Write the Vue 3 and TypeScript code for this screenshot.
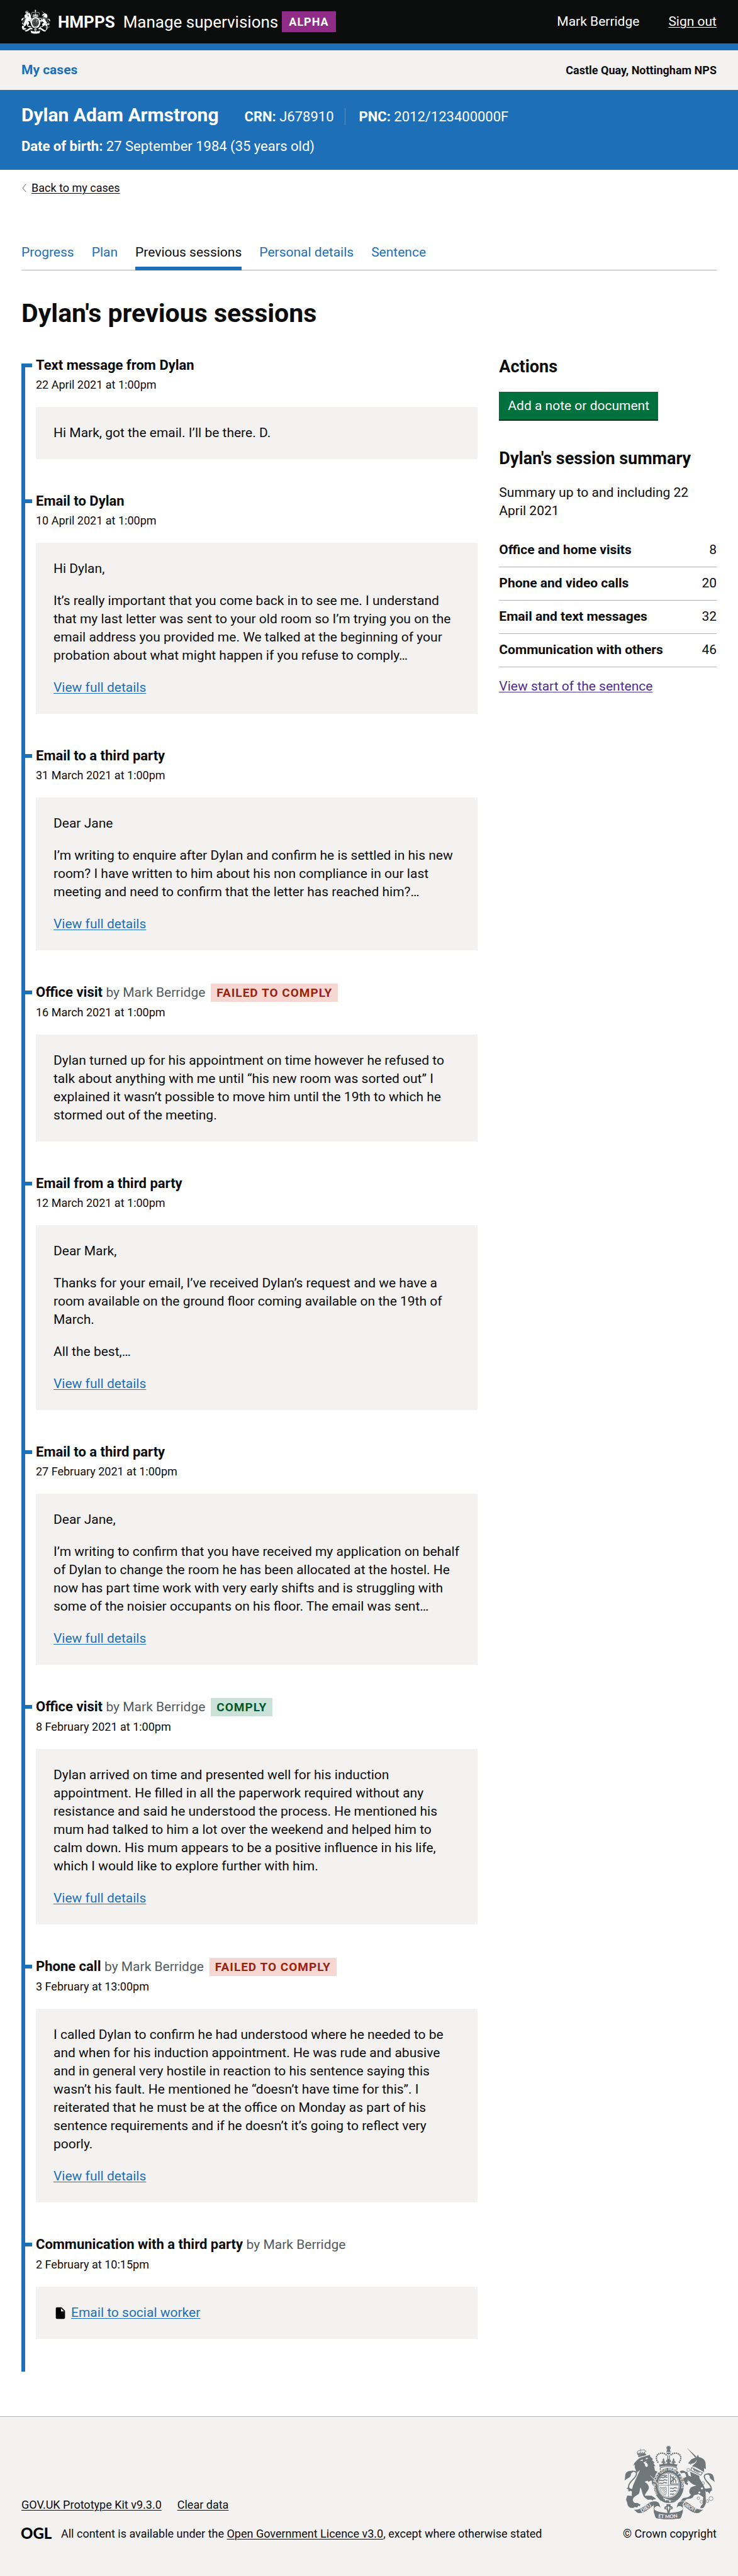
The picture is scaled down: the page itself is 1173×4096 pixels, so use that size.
<script setup lang="ts">
interface Session {
  title: string
  by?: string
  outcome?: 'failed' | 'comply'
  date: string
  body?: string[]
  more?: boolean
  file?: string
}

const outcomeLabels = { failed: 'Failed to comply', comply: 'Comply' }

const tabs = ['Progress', 'Plan', 'Previous sessions', 'Personal details', 'Sentence']
const currentTab = 'Previous sessions'

const sessions: Session[] = [
  {
    title: 'Text message from Dylan',
    date: '22 April 2021 at 1:00pm',
    body: ['Hi Mark, got the email. I’ll be there. D.'],
  },
  {
    title: 'Email to Dylan',
    date: '10 April 2021 at 1:00pm',
    body: [
      'Hi Dylan,',
      'It’s really important that you come back in to see me. I understand that my last letter was sent to your old room so I’m trying you on the email address you provided me. We talked at the beginning of your probation about what might happen if you refuse to comply…',
    ],
    more: true,
  },
  {
    title: 'Email to a third party',
    date: '31 March 2021 at 1:00pm',
    body: [
      'Dear Jane',
      'I’m writing to enquire after Dylan and confirm he is settled in his new room? I have written to him about his non compliance in our last meeting and need to confirm that the letter has reached him?…',
    ],
    more: true,
  },
  {
    title: 'Office visit',
    by: 'Mark Berridge',
    outcome: 'failed',
    date: '16 March 2021 at 1:00pm',
    body: [
      'Dylan turned up for his appointment on time however he refused to talk about anything with me until “his new room was sorted out” I explained it wasn’t possible to move him until the 19th to which he stormed out of the meeting.',
    ],
  },
  {
    title: 'Email from a third party',
    date: '12 March 2021 at 1:00pm',
    body: [
      'Dear Mark,',
      'Thanks for your email, I’ve received Dylan’s request and we have a room available on the ground floor coming available on the 19th of March.',
      'All the best,…',
    ],
    more: true,
  },
  {
    title: 'Email to a third party',
    date: '27 February 2021 at 1:00pm',
    body: [
      'Dear Jane,',
      'I’m writing to confirm that you have received my application on behalf of Dylan to change the room he has been allocated at the hostel. He now has part time work with very early shifts and is struggling with some of the noisier occupants on his floor. The email was sent…',
    ],
    more: true,
  },
  {
    title: 'Office visit',
    by: 'Mark Berridge',
    outcome: 'comply',
    date: '8 February 2021 at 1:00pm',
    body: [
      'Dylan arrived on time and presented well for his induction appointment. He filled in all the paperwork required without any resistance and said he understood the process. He mentioned his mum had talked to him a lot over the weekend and helped him to calm down. His mum appears to be a positive influence in his life, which I would like to explore further with him.',
    ],
    more: true,
  },
  {
    title: 'Phone call',
    by: 'Mark Berridge',
    outcome: 'failed',
    date: '3 February at 13:00pm',
    body: [
      'I called Dylan to confirm he had understood where he needed to be and when for his induction appointment. He was rude and abusive and in general very hostile in reaction to his sentence saying this wasn’t his fault. He mentioned he “doesn’t have time for this”. I reiterated that he must be at the office on Monday as part of his sentence requirements and if he doesn’t it’s going to reflect very poorly.',
    ],
    more: true,
  },
  {
    title: 'Communication with a third party',
    by: 'Mark Berridge',
    date: '2 February at 10:15pm',
    file: 'Email to social worker',
  },
]

const summary = [
  { label: 'Office and home visits', count: 8 },
  { label: 'Phone and video calls', count: 20 },
  { label: 'Email and text messages', count: 32 },
  { label: 'Communication with others', count: 46 },
]
</script>

<template>
  <div class="page">
    <svg class="defs" aria-hidden="true">
      <symbol id="royal-arms" viewBox="96 84 750 612">
        <!-- St Edward's crown -->
        <path d="M446 84h30l-8 12 10-6v22l-10-6 8 12h-30l8-12-10 6V90l10 6zM443 134c2-14 10-18 18-18s16 4 18 18zM443 140h36c-2 10-8 16-18 16s-16-6-18-16zM451 162h7v30h-7zM465 162h7v30h-7z" />
        <g class="beads">
          <path d="M372 219C352 190 356 158 384 148 C404 140 430 146 441 158" />
          <path d="M551 219C571 190 567 158 539 148 C519 140 493 146 482 158" />
        </g>
        <path d="M385 236c20 6 30-2 31-14l-9 6c-8-4-6-16 3-16l4 4c-5-14-1-22 5-30 6 8 10 16 5 30l4-4c9 0 11 12 3 16l-9-6c3 10 14 12 26 8l4-14-10 6v-22l12 4-8-12h30l-8 12 12-4v22l-10-6 4 14c12 4 23 2 26-8l-9 6c-8-4-6-16 3-16l4 4c-5-14-1-22 5-30 6 8 10 16 5 30l4-4c9 0 11 12 3 16l-9-6c1 12 11 20 31 14l-10 24c-45-14-97-14-142 0z" />
        <path class="line" d="M393 266c-5 10-4 16 2 22M529 266c5 10 4 16-2 22M393 266c44-14 92-14 136 0" />
        <!-- garter and shield -->
        <ellipse cx="463" cy="414" rx="126" ry="147" />
        <ellipse class="gap" cx="461" cy="412" rx="92" ry="106" />
        <ellipse class="line thin" cx="461" cy="412" rx="86" ry="100" />
        <path class="line thin" d="M461 312v200M375 412h172" />
        <path class="fine" d="M392 350c14-12 20 8 32-4s18 6 28-2M384 374c14-12 24 8 36-4s20 6 32-2M382 397c14-12 24 8 36-4s20 6 32-2M404 334c14-8 30 4 46-4M474 440c14-12 20 8 32-4s18 6 26-2M474 464c14-12 20 8 30-4s18 6 24-2M474 488c12-10 18 6 34-6M480 340c20 0 10 20 26 22s20 16 14 30M520 345c-10 14-34 20-38 46M500 336v56M478 322v80h66" />
        <path class="line thin" d="M388 428c16 8 36 6 52-2 6 20 4 44-4 68-24-8-42-34-48-66zM400 434l30 46M412 434l24 34M424 432l14 20" />
        <path class="gap" d="M392 512c20-14 26-10 30 4 44 22 72 26 104 22l-24 20c-40 8-92-6-110-46z" />
        <path d="M386 524c4-20 22-28 32-16 6 6 0 14-4 12 40 24 78 24 116 18l-22 16c-40 12-84 4-110-16-8 4-12-4-12-14z" />
        <g class="gap"><circle cx="437" cy="534" r="7" /><circle cx="473" cy="546" r="7" /></g>
        <!-- lion -->
        <path d="M196 205l16-14 20-11 74-22 3 15 20 18-4 14 20 18-10 4 17 26-12-2 8 40 22 8-16 24-4 20 14 44 8 44-24-2-24-24-4-34-28 12-6-10-25 10c30 18 42 40 33 62-12 24-30 36-29 56 26-4 46 0 54-2l34 22-2 10-14-2-8 10-12-8-30 2-30-22c-20-40-16-54-30-82-8 20-4 48-18 58-30 18-46 30-46 50 10 30 26 22 38 22l26 14-6 14-14-4-6 14-22-4-10 8c-30 4-50-10-52-40l-10-30 10-34 38 4c-2-40 4-78 18-106l50-110-28 24-6-18-10-28 2-24-14 12 8-22z" />
        <path d="M206 166l66-16 4 10-66 18zM204 162l-4-26 12 14 4-16 8 18 4-24 10 22 8-20 4 18 14-20 2 26z" />
        <path class="beads small" d="M202 150c-6-20 8-32 26-24 16-14 44-14 46 14M228 112v18" />
        <path class="gap" d="M220 208l28-12-4 14zM268 192l14-10 8 10-16 4zM250 222l30-12-12 14c12-2 22 12 20 24-2 14-18 14-22 0l-6-18z" />
        <path class="gap-line" d="M310 332l34 34 24 38" />
        <path class="tail" d="M190 424c-20 44-62 30-62 0 0-46 62-66 66-106 2-20-20-28-44-20" />
        <path d="M164 292c-46-4-62 16-64 38l-4 44c14-20 42-18 50-44 4-16 4-22 18-28zM124 428l-14 12 14 4 4 22 14-8 14 6 14-18-26-6z" />
        <!-- unicorn -->
        <path d="M612 98l82 76-10 8zM626 226l26-32 42-16 12-20 8 20c36 6 58 30 56 58l2 42-16-8 2 34-34-22-38-20-30-8 34-32c6-14 4-20 2-22 0 20-18 30-38 32l-12 12 2-12-14 2z" />
        <path d="M640 298l78 36c-4 20 14 42 28 66 12 20 22 44 24 72l2 92-10 22-12 16-26 2 8-22 14-14 4-58-40-26c-10 10-38 4-42 22-6 18-34 20-56 22l-16 14h-34l20-22c30-6 52-6 66-30-26-14-12-54 8-64l38-12c-20-2-44-14-70-46l-12 18 12 10-6 16-22-16-2-14-18-12 4-16 30-12c-10-16 4-18-16-34l-28 4-12-14c12-12 38-14 52 6l10-6 12 34 22 8z" />
        <path class="line" d="M654 264l90 44-14 20-84-40zM668 286l4-12 8 18 6-10 6 16 8-10 4 16 10-8 2 14" />
        <path class="tail" d="M764 440c30 44 62 20 52-10-10-36-64-60-56-98 4-12 22-16 40-12" />
        <path d="M786 312c46-2 52 26 54 48l6 26c-16-18-42-24-42-46 0-10-6-16-18-20zM812 434l14 20-14 4-10 26-14-20-14 4-12-26z" />
        <g class="line thin rings">
          <circle cx="626" cy="284" r="12" /><circle cx="608" cy="312" r="9" /><circle cx="616" cy="368" r="13" /><circle cx="748" cy="394" r="12" />
          <circle cx="710" cy="520" r="11" /><circle cx="735" cy="550" r="12" /><circle cx="785" cy="544" r="12" /><circle cx="815" cy="523" r="17" />
        </g>
        <g class="gap"><circle cx="740" cy="438" r="9" /><circle cx="718" cy="472" r="8" /></g>
        <!-- motto ribbon -->
        <path d="M172 616c50 4 86-28 120-52 34-26 88-24 94 10l8 26c-14-14-24-18-34-12-18 10-14 26 0 38 60 22 142 22 202 0 14-12 18-28 0-38-10-6-20-2-34 12l8-26c6-34 60-36 94-10 34 24 70 56 120 52l-34 26c-30 8-62-6-92-30l-44-34 0 60c-16 38-6 58-50 52-50 12-98 12-142 0-44 4-34-14-50-52v-60l-44 34c-30 24-62 38-92 30z" />
        <path class="gap" d="M342 612c0-20 26-32 44-20-14 10-12 26 2 38l-36-8zM580 612c0-20-26-32-44-20 14 10 12 26-2 38l36-8z" />
        <path d="M444 570h34v18c16-6 22 14 14 26l-12-4-8 18c0 24-22 24-22 0l-8-18-12 4c-8-12-2-32 14-26z" />
        <path class="gap" d="M461 584l8 14-8 28-8-28zM436 600l8-4 4 8-8 2zM486 600l-8-4-4 8 8 2z" />
      </symbol>
      <path id="motto-ring" d="M384 505A108 127 0 1 1 538 505" />
      <path id="motto-left" d="M238 640Q290 612 338 570" />
      <path id="motto-mid" d="M374 682Q461 696 552 678" />
      <path id="motto-right" d="M574 572Q630 612 692 638" />
    </svg>

    <header class="masthead">
      <div class="brand">
        <svg class="brand-arms" aria-hidden="true"><use href="#royal-arms" /></svg>
        <strong class="org">HMPPS</strong>
        <span class="service">Manage supervisions</span>
        <strong class="tag alpha">Alpha</strong>
      </div>
      <div class="account">
        <span>Mark Berridge</span>
        <a href="#">Sign out</a>
      </div>
    </header>

    <nav class="subnav" aria-label="Cases">
      <a href="#">My cases</a>
      <strong>Castle Quay, Nottingham NPS</strong>
    </nav>

    <section class="person">
      <div class="person-row">
        <h2>Dylan Adam Armstrong</h2>
        <p class="ref"><b>CRN:</b> J678910</p>
        <p class="ref"><b>PNC:</b> 2012/123400000F</p>
      </div>
      <p><b>Date of birth:</b> 27 September 1984 (35 years old)</p>
    </section>

    <main class="content">
      <div class="back">
        <svg viewBox="0 0 8 14" aria-hidden="true"><path d="M7 1L2 7l5 6" /></svg>
        <a href="#">Back to my cases</a>
      </div>

      <nav class="tabs" aria-label="Case sections">
        <a v-for="tab in tabs" :key="tab" href="#" :class="{ current: tab === currentTab }">{{ tab }}</a>
      </nav>

      <h1>Dylan's previous sessions</h1>

      <div class="columns">
        <ol class="timeline">
          <li v-for="(s, i) in sessions" :key="i">
            <div class="heading">
              <h3>{{ s.title }} <span v-if="s.by" class="by">by {{ s.by }}</span></h3>
              <strong v-if="s.outcome" class="tag" :class="s.outcome">{{ outcomeLabels[s.outcome] }}</strong>
            </div>
            <p class="date">{{ s.date }}</p>
            <div class="note">
              <p v-for="(text, j) in s.body" :key="j">{{ text }}</p>
              <a v-if="s.more" href="#">View full details</a>
              <div v-if="s.file" class="file">
                <svg viewBox="0 0 24 24" aria-hidden="true"><path d="M6 2C4.900 2 4.010 2.900 4.010 4L4 20c0 1.100.890 2 1.990 2H18c1.100 0 2-.900 2-2V8l-6-6H6zm7 7V3.500L18.500 9H13z" /></svg>
                <a href="#">{{ s.file }}</a>
              </div>
            </div>
          </li>
        </ol>

        <aside class="side">
          <h2>Actions</h2>
          <button type="button">Add a note or document</button>
          <h2>Dylan's session summary</h2>
          <p>Summary up to and including 22 April 2021</p>
          <table>
            <tbody>
              <tr v-for="row in summary" :key="row.label">
                <th scope="row">{{ row.label }}</th>
                <td>{{ row.count }}</td>
              </tr>
            </tbody>
          </table>
          <a class="visited" href="#">View start of the sentence</a>
        </aside>
      </div>
    </main>

    <footer class="footer">
      <div class="meta">
        <div class="meta-links">
          <a href="#">GOV.UK Prototype Kit v9.3.0</a>
          <a href="#">Clear data</a>
        </div>
        <div class="licence">
          <svg class="ogl" viewBox="0 0 47 19" role="img" aria-label="Open Government Licence"><text x="-1" y="18">OGL</text></svg>
          <span>All content is available under the <a href="#">Open Government Licence v3.0</a>, except where otherwise stated</span>
        </div>
      </div>
      <div class="copyright">
        <svg class="footer-arms" viewBox="96 84 750 612" aria-hidden="true">
          <use href="#royal-arms" x="96" y="84" width="750" height="612" />
          <g class="motto">
            <text class="ring"><textPath href="#motto-ring" startOffset="4%">HONI SOIT QUI MAL Y PENSE</textPath></text>
            <text><textPath href="#motto-left">DIEU</textPath></text>
            <text><textPath href="#motto-mid">ET MON</textPath></text>
            <text><textPath href="#motto-right">DROIT</textPath></text>
          </g>
        </svg>
        <a href="#">© Crown copyright</a>
      </div>
    </footer>
  </div>
</template>

<style>
body {
  margin: 0;
  background: #f3f2f1;
}
</style>

<style scoped>
.page {
  --ink: #0b0c0c;
  --blue: #1d70b8;
  --grey: #f3f2f1;
  --line: #b1b4b6;
  background: #fff;
  color: var(--ink);
  font: 21px/29px Roboto, "Liberation Sans", sans-serif;
}

h1, h2, h3, p, ol { margin: 0; padding: 0; }
a { color: var(--blue); text-underline-offset: 2px; text-decoration-thickness: 1px; }

.defs { position: absolute; width: 0; height: 0; }
#royal-arms { fill: currentColor; }
.gap { fill: var(--backdrop); }
.gap-line { fill: none; stroke: var(--backdrop); stroke-width: 5; }
.line { fill: none; stroke: currentColor; stroke-width: 6; }
.thin { stroke-width: 4; }
.fine { fill: none; stroke: currentColor; stroke-width: 8; }
.tail { fill: none; stroke: currentColor; stroke-width: 10; }
.beads { fill: none; stroke: currentColor; stroke-width: 13; stroke-linecap: round; stroke-dasharray: 0 16; }
.small { stroke-width: 8; stroke-dasharray: 0 10; }

.masthead {
  --backdrop: #0b0c0c;
  display: flex;
  justify-content: space-between;
  align-items: center;
  height: 69px;
  padding: 0 34px;
  border-bottom: 11px solid var(--blue);
  background: var(--ink);
  color: #fff;
}
.brand, .account { display: flex; align-items: center; }
.brand-arms { width: 46px; height: 39px; margin-right: 12px; }
.org { margin-right: 13px; }
.org, .service { font-size: 26px; line-height: 34px; }
.account { gap: 46px; }
.account a { color: #fff; }

.tag {
  padding: 3px 9px;
  font-size: 19px;
  line-height: 23px;
  letter-spacing: 1px;
  text-transform: uppercase;
}
.alpha { margin-left: 6px; padding: 5px 11px; background: #912b88; font-size: 18px; }
.failed { background: #f6d7d2; color: #942514; }
.comply { background: #cce2d8; color: #005a30; }

.subnav {
  display: flex;
  justify-content: space-between;
  align-items: baseline;
  padding: 17px 34px;
  background: var(--grey);
}
.subnav a { font-weight: 700; text-decoration: none; }
.subnav strong { font-size: 18px; }

.person {
  padding: 22px 34px 23px;
  background: var(--blue);
  color: #fff;
  font-size: 22px;
}
.person-row { display: flex; align-items: baseline; margin-bottom: 18px; }
.person h2 { margin-right: 41px; font-size: 30px; line-height: 35px; }
.ref { line-height: 27px; }
.ref + .ref { margin-left: 17px; padding-left: 22px; border-left: 1px solid #5694ca; }

.content { padding: 17px 34px 71px; }
.back { display: flex; align-items: center; gap: 8px; font-size: 18px; line-height: 23px; }
.back svg { width: 8px; height: 14px; fill: none; stroke: #505a5f; }
.back a { color: var(--ink); }

.tabs {
  display: flex;
  gap: 28px;
  margin: 77px 0 45px;
  box-shadow: inset 0 -1px var(--line);
}
.tabs a { padding-bottom: 8px; border-bottom: 6px solid transparent; text-decoration: none; }
.tabs .current { border-color: var(--blue); color: var(--ink); }

h1 { margin-bottom: 45px; font-size: 41px; line-height: 46px; }

.columns {
  display: grid;
  grid-template-columns: 1fr calc((100% - 68px) / 3);
  gap: 34px;
  align-items: start;
}

.timeline { position: relative; list-style: none; }
.timeline::before {
  content: "";
  position: absolute;
  top: 12px;
  bottom: 0;
  left: 0;
  width: 6px;
  background: var(--blue);
}
.timeline li { position: relative; padding: 0 0 52px 23px; }
.timeline li::before {
  content: "";
  position: absolute;
  top: 12px;
  left: 0;
  width: 17px;
  height: 6px;
  background: var(--blue);
}
.heading { display: flex; align-items: baseline; gap: 9px; }
h3 { font-size: 22px; line-height: 29px; }
.by { color: #505a5f; font-size: 21px; font-weight: 400; }
.date { margin: 5px 0 24px; font-size: 18px; line-height: 23px; }
.note {
  display: flex;
  flex-direction: column;
  align-items: flex-start;
  gap: 22px;
  padding: 27px 28px;
  background: var(--grey);
}
.file { display: flex; align-items: center; gap: 6px; }
.file svg { width: 22px; height: 22px; }

.side h2 { font-size: 27px; line-height: 34px; }
.side button {
  display: block;
  margin: 23px 0 45px;
  padding: 8px 14px 7px;
  border: 0;
  background: #00703c;
  box-shadow: 0 2px #002d18;
  color: #fff;
  font: inherit;
}
.side p { margin: 23px 0 22px; }
table { width: 100%; margin-bottom: 16px; border-collapse: collapse; }
th, td { padding: 11px 0 12px; border-bottom: 1px solid var(--line); text-align: left; }
td { text-align: right; }
.visited { color: #4c2c92; }

.footer {
  --backdrop: #f3f2f1;
  display: flex;
  justify-content: space-between;
  align-items: flex-end;
  padding: 46px 34px 57px;
  border-top: 1px solid var(--line);
  background: var(--grey);
  font-size: 18px;
  line-height: 23px;
}
.footer a { color: var(--ink); }
.meta-links { display: flex; gap: 25px; margin-bottom: 23px; }
.licence { display: flex; align-items: center; gap: 16px; }
.ogl { width: 47px; height: 19px; overflow: visible; }
.ogl text { font: 900 24px Lato, Roboto, sans-serif; }
.copyright { display: flex; flex-direction: column; align-items: center; gap: 11px; }
.footer .copyright a { text-decoration: none; }
.footer-arms { width: 143px; height: 117px; color: #6f777b; }
.motto { fill: var(--backdrop); font: 700 42px Lato, Roboto, sans-serif; }
.motto .ring { font-size: 34px; }
</style>
